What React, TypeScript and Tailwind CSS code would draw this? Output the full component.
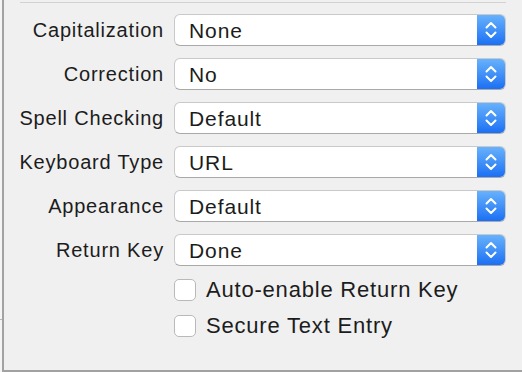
import React from "react";

const rows = [
  ["Capitalization", "None"],
  ["Correction", "No"],
  ["Spell Checking", "Default"],
  ["Keyboard Type", "URL"],
  ["Appearance", "Default"],
  ["Return Key", "Done"],
];

function Chevrons() {
  return (
    <svg width="14" height="20" viewBox="0 0 14 20" fill="none">
      <path d="M2.5 7.5 L7 3 L11.5 7.5" stroke="white" strokeWidth="2" strokeLinecap="round" strokeLinejoin="round" />
      <path d="M2.5 12.5 L7 17 L11.5 12.5" stroke="white" strokeWidth="2" strokeLinecap="round" strokeLinejoin="round" />
    </svg>
  );
}

function Popup({ value }: { value: string }) {
  return (
    <div className="flex h-[32px] w-[332px] rounded-[6px] border border-[#c9c9c9] border-b-[#a9a9a9] bg-white overflow-hidden">
      <div className="flex flex-1 items-center pl-[14px] text-[21px] leading-none tracking-[0.9px] text-[#1c1c1c]">{value}</div>
      <div className="flex w-[28px] items-center justify-center bg-gradient-to-b from-[#67b1fc] to-[#1a6ff3]">
        <Chevrons />
      </div>
    </div>
  );
}

function Check({ label }: { label: string }) {
  return (
    <div className="flex items-center gap-[10px]">
      <div className="h-[22px] w-[22px] rounded-[5px] border border-[#b9b9b9] bg-white" />
      <span className="text-[22px] leading-none tracking-[0.8px] text-[#1c1c1c]">{label}</span>
    </div>
  );
}

export default function App() {
  return (
    <div
      className="relative h-[372px] w-[522px] bg-[#f5f5f5] pl-[2px]"
      style={{ fontFamily: '"Liberation Sans", Arial, sans-serif' }}
    >
      <div className="absolute left-0 top-[319px] h-px w-[2px] bg-[#b5b5b5]" />
      <div className="flex h-full flex-col border-b-2 border-l-2 border-[#a2a2a2] bg-[#f0f0f0]">
        <div className="ml-[16px] mt-[2px] h-px w-[486px] bg-[#d2d2d2]" />
        <div className="mt-[11px] flex flex-col gap-[12px]">
          {rows.map(([label, value]) => (
            <div key={label} className="flex items-center">
              <div className="w-[160px] text-right text-[20px] leading-none tracking-[0.8px] text-[#1c1c1c]">{label}</div>
              <div className="ml-[10px]">
                <Popup value={value} />
              </div>
            </div>
          ))}
        </div>
        <div className="ml-[170px] mt-[13px] flex flex-col gap-[14px]">
          <Check label="Auto-enable Return Key" />
          <Check label="Secure Text Entry" />
        </div>
      </div>
    </div>
  );
}
